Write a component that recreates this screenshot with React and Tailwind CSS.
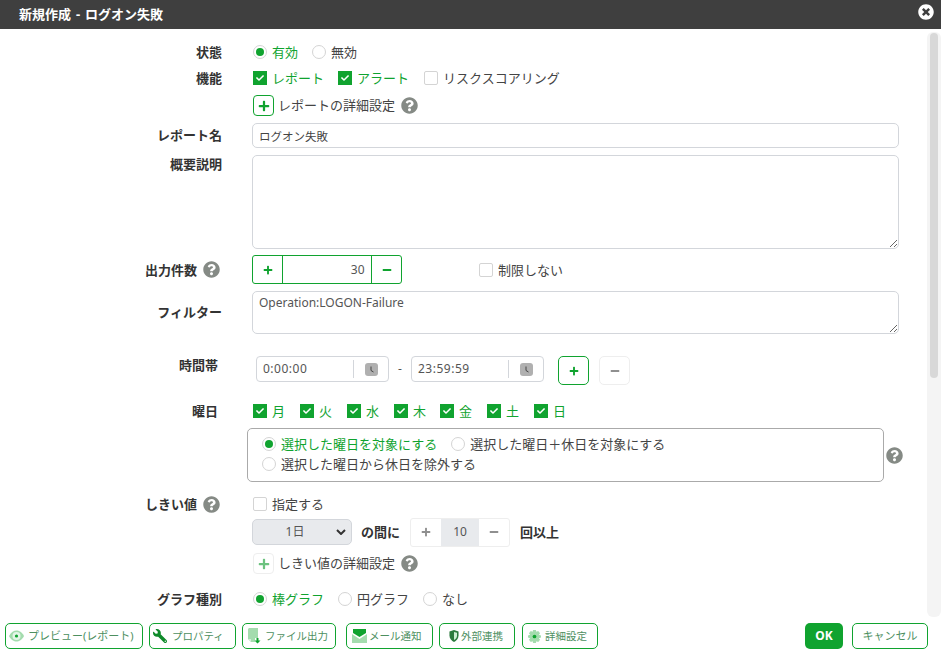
import React from "react";
import { FaQuestionCircle, FaTimesCircle, FaPlus, FaMinus, FaWrench, FaCheck } from "react-icons/fa";

const G = "text-[#10a32f]";

function Help({ className = "" }) {
  return <FaQuestionCircle className={"text-[#858a85] text-[17px] shrink-0 " + className} />;
}

function Radio({ on, label, className = "" }) {
  return (
    <label className={"flex items-center " + className}>
      <span className="w-[14px] h-[14px] rounded-full border border-[#d4d4d4] flex items-center justify-center shrink-0 bg-white">
        {on && <span className="w-[8px] h-[8px] rounded-full bg-[#10a32f]" />}
      </span>
      <span className={"ml-[5px] " + (on ? G : "text-[#444]")}>{label}</span>
    </label>
  );
}

function Check({ on, label, className = "" }) {
  return (
    <label className={"flex items-center " + className}>
      <span
        className={
          "w-[14px] h-[14px] flex items-center justify-center shrink-0 " +
          (on ? "bg-[#10a32f]" : "border border-[#d4d4d4] rounded-[2px] bg-white")
        }
      >
        {on && <FaCheck className="text-white text-[8px]" />}
      </span>
      <span className={"ml-[5px] " + (on ? G : "text-[#444]")}>{label}</span>
    </label>
  );
}

function Row({ label, help, h, mt = 0, children, labelClass = "" }) {
  return (
    <div className="flex items-stretch" style={{ height: h, marginTop: mt }}>
      <div className={"w-[222px] shrink-0 flex justify-end items-center font-bold text-[#333] " + labelClass}>
        {label}
        {help && <Help className="ml-[6px] mr-[2px]" />}
      </div>
      <div className="ml-[30px] flex-1 flex items-center min-w-0">{children}</div>
    </div>
  );
}

function Clock() {
  return (
    <svg width="13" height="13" viewBox="0 0 13 13" className="shrink-0">
      <rect width="13" height="13" rx="3" fill="#b0b0b0" />
      <path d="M6 3.5V7.5L8.5 9" stroke="#444" strokeWidth="1" fill="none" />
    </svg>
  );
}

function TimeInput({ value }) {
  return (
    <div className="w-[133px] h-[26px] border border-[#d3d6db] rounded-[4px] flex items-center pl-[6px] text-[#555] tracking-[0.5px]">
      <span className="flex-1">{value}</span>
      <span className="w-px h-[18px] bg-[#d3d6db]" />
      <span className="w-[34px] flex justify-center"><Clock /></span>
    </div>
  );
}

function Eye() {
  return (
    <svg width="15" height="12" viewBox="0 0 15 12">
      <path d="M0 6C2 2 5 0.5 7.5 0.5S13 2 15 6c-2 4-5 5.5-7.5 5.5S2 10 0 6z" fill="#a4dcae" />
      <circle cx="7.5" cy="6" r="4" fill="#e4f5e7" />
      <circle cx="7.5" cy="6" r="1.6" fill="#10a32f" />
    </svg>
  );
}

function FileIco() {
  return (
    <svg width="14" height="16" viewBox="0 0 14 16">
      <path d="M2 0H11V10H8V14H4L1 11V1z" fill="#a4dcae" />
      <path d="M1 11H4V14z" fill="#d6efda" />
      <path d="M9.5 10H11.5V12.5H13.5L10.5 15.5L7.5 12.5H9.5z" fill="#10a32f" />
    </svg>
  );
}

function Mail() {
  return (
    <svg width="15" height="14" viewBox="0 0 15 14">
      <path d="M0 5L7.5 10L15 5V14H0z" fill="#a4dcae" />
      <path d="M1 0H14V4L7.5 8L1 4z" fill="#10a32f" />
    </svg>
  );
}

function Shield() {
  return (
    <svg width="10" height="12" viewBox="0 0 11 13">
      <path d="M0.5 1.5L5.5 0L10.5 1.5V6C10.5 9.5 8 12 5.5 13C3 12 0.5 9.5 0.5 6z" fill="#2b7a3d" />
      <path d="M5.5 2V11C7.5 10 8.8 8.2 8.8 6V2.8z" fill="#cdeed3" />
    </svg>
  );
}

function Gear() {
  return (
    <svg width="13" height="13" viewBox="0 0 14 14">
      <path d="M5.5 0H8.5L9 2L11 1.2L13 3.5L11.7 5L14 5.8V8.2L11.7 9L13 10.5L11 12.8L9 12L8.5 14H5.5L5 12L3 12.8L1 10.5L2.3 9L0 8.2V5.8L2.3 5L1 3.5L3 1.2L5 2z" fill="#a4dcae" />
      <circle cx="7" cy="7" r="2" fill="#10a32f" />
    </svg>
  );
}

function FootBtn({ icon, label, w, className = "" }) {
  return (
    <button
      className={"h-[26px] border border-[#10a32f] rounded-[5px] flex items-center justify-start text-[#4d8f5f] bg-white shrink-0 " + className}
      style={{ width: w }}
    >
      {icon}
      <span>{label}</span>
    </button>
  );
}

export default function App() {
  return (
    <div className="w-[941px] h-[657px] bg-white flex flex-col overflow-hidden text-[13px] leading-[18px] text-[#444] font-['Noto_Sans','Noto_Sans_CJK_JP',sans-serif]">
      <header className="h-[29px] bg-[#3f3f3f] flex items-center justify-between pl-[19px] pr-[7px] shrink-0">
        <h1 className="text-white font-bold text-[13px] -mt-[2px] [word-spacing:1.5px]">新規作成 - ログオン失敗</h1>
        <FaTimesCircle className="text-white text-[16px] -mt-[5px]" />
      </header>

      <div className="flex-1 flex min-h-0">
        <main className="flex-1 min-w-0 overflow-hidden pt-[14px]">
          <Row label="状態" h={18}>
            <Radio on label="有効" className="ml-[1px]" />
            <Radio label="無効" className="ml-[14px]" />
          </Row>
          <Row label="機能" h={18} mt={8}>
            <Check on label="レポート" className="ml-[1px]" />
            <Check on label="アラート" className="ml-[14px]" />
            <Check label="リスクスコアリング" className="ml-[15px]" />
          </Row>
          <Row label="" h={21} mt={8}>
            <span className="w-[21px] h-[21px] ml-[1px] border border-[#10a32f] rounded-[4px] flex items-center justify-center">
              <FaPlus className="text-[#10a32f] text-[12px]" />
            </span>
            <span className="ml-[4px] -mt-[2px]">レポートの詳細設定</span>
            <Help className="ml-[6px]" />
          </Row>
          <Row label="レポート名" h={25} mt={7} labelClass="pb-[2px]">
            <input readOnly value="ログオン失敗" className="w-[647px] h-[25px] border border-[#d3d6db] rounded-[5px] px-[6px] text-[11.5px] text-[#444] outline-none" />
          </Row>
          <div className="flex h-[94px] mt-[7px]">
            <div className="w-[222px] shrink-0 text-right font-bold text-[#333]">概要説明</div>
            <textarea readOnly className="ml-[30px] w-[647px] h-[94px] border border-[#d3d6db] rounded-[5px] outline-none" />
          </div>
          <Row label="出力件数" help h={29} mt={6}>
            <div className="flex h-[29px] w-[150px] border border-[#10a32f] rounded-[3px]">
              <span className="w-[30px] flex items-center justify-center border-r border-[#10a32f]"><FaPlus className="text-[#10a32f] text-[10px]" /></span>
              <span className="flex-1 flex items-center justify-end pr-[6px] text-[12px] text-[#555] tracking-[0.3px]">30</span>
              <span className="w-[30px] flex items-center justify-center border-l border-[#10a32f]"><FaMinus className="text-[#10a32f] text-[10px]" /></span>
            </div>
            <Check label="制限しない" className="ml-[77px]" />
          </Row>
          <Row label="フィルター" h={43} mt={7} labelClass="pb-[2px]">
            <textarea readOnly value="Operation:LOGON-Failure" className="w-[647px] h-[43px] border border-[#d3d6db] rounded-[5px] px-[6px] py-[2px] text-[12px] leading-[18px] text-[#555] outline-none" />
          </Row>
          <div className="flex mt-[22px] h-[29px]">
            <div className="w-[218px] shrink-0 text-right font-bold text-[#333]">時間帯</div>
            <div className="ml-[38px] flex items-start text-[12px]">
              <TimeInput value="0:00:00" />
              <span className="w-[22px] text-center leading-[26px] text-[#555]">-</span>
              <TimeInput value="23:59:59" />
              <span className="ml-[14px] w-[31px] h-[29px] border border-[#10a32f] rounded-[5px] flex items-center justify-center">
                <FaPlus className="text-[#10a32f] text-[10px]" />
              </span>
              <span className="ml-[10px] w-[31px] h-[29px] border border-[#eeeeee] rounded-[5px] flex items-center justify-center">
                <FaMinus className="text-[#8f8f8f] text-[10px]" />
              </span>
            </div>
          </div>
          <Row label="曜日" h={18} mt={17} labelClass="pr-[4px]">
            <Check on label="月" className="ml-[1px]" />
            <Check on label="火" className="ml-[15px]" />
            <Check on label="水" className="ml-[15px]" />
            <Check on label="木" className="ml-[15px]" />
            <Check on label="金" className="ml-[14px]" />
            <Check on label="土" className="ml-[15px]" />
            <Check on label="日" className="ml-[15px]" />
          </Row>
          <div className="flex items-center ml-[247px] mt-[8px]">
            <div className="w-[637px] h-[54px] border border-[#aaaaaa] rounded-[5px] pl-[14px] pt-[6px] shrink-0">
              <div className="flex">
                <Radio on label="選択した曜日を対象にする" />
                <Radio label="選択した曜日＋休日を対象にする" className="ml-[14px]" />
              </div>
              <Radio label="選択した曜日から休日を除外する" className="mt-[2px]" />
            </div>
            <Help className="ml-[2px]" />
          </div>
          <Row label="しきい値" help h={18} mt={13}>
            <Check label="指定する" className="ml-[1px]" />
          </Row>
          <Row label="" h={26} mt={6}>
            <div className="w-[100px] h-[26px] bg-[#e8eaed] border border-[#d3d6db] rounded-[5px] flex items-center text-[12px] text-[#555]">
              <span className="flex-1 text-center pl-[1px]">1日</span>
              <svg width="10" height="6" viewBox="0 0 10 6" className="mr-[5px]"><path d="M1 1L5 5L9 1" fill="none" stroke="#333" strokeWidth="2" /></svg>
            </div>
            <span className="ml-[9px] font-bold text-[#333]">の間に</span>
            <div className="ml-[10px] w-[100px] h-[29px] border border-[#eeeeee] rounded-[3px] flex">
              <span className="w-[30px] flex items-center justify-center"><FaPlus className="text-[#8f8f8f] text-[10px]" /></span>
              <span className="flex-1 bg-[#e8eaed] flex items-center justify-center text-[12px] text-[#555]">10</span>
              <span className="w-[30px] flex items-center justify-center"><FaMinus className="text-[#8f8f8f] text-[10px]" /></span>
            </div>
            <span className="ml-[10px] font-bold text-[#333]">回以上</span>
          </Row>
          <Row label="" h={21} mt={8}>
            <span className="w-[21px] h-[21px] ml-[1px] border border-[#eeeeee] rounded-[4px] flex items-center justify-center">
              <FaPlus className="text-[#6cc27f] text-[12px]" />
            </span>
            <span className="ml-[4px] -mt-[2px]">しきい値の詳細設定</span>
            <Help className="ml-[6px]" />
          </Row>
          <Row label="グラフ種別" h={18} mt={16}>
            <Radio on label="棒グラフ" className="ml-[1px]" />
            <Radio label="円グラフ" className="ml-[14px]" />
            <Radio label="なし" className="ml-[14px]" />
          </Row>
        </main>
        <aside className="w-[14px] shrink-0 bg-[#f4f4f4] rounded-[6px] mt-[3px] pl-[3px] pt-[1px]">
          <div className="w-[8px] h-[345px] bg-[#d8d8d8] rounded-[4px]" />
        </aside>
      </div>

      <footer className="h-[40px] shrink-0 flex pl-[5px] pt-[6px]">
        <FootBtn w={138} className="pl-[3px] gap-[4px] text-[11px]" icon={<Eye />} label="プレビュー(レポート)" />
        <FootBtn w={87} className="ml-[6px] pl-[3px] gap-[5px] text-[10.5px]" icon={<FaWrench className="text-[#0f8a2a] text-[14px] -scale-x-100" />} label="プロパティ" />
        <FootBtn w={94} className="ml-[6px] pl-[4px] gap-[4px] text-[10.5px]" icon={<FileIco />} label="ファイル出力" />
        <FootBtn w={87} className="ml-[10px] pl-[5px] gap-[2px] text-[10.5px]" icon={<Mail />} label="メール通知" />
        <FootBtn w={76} className="ml-[6px] pl-[9px] gap-[2px] text-[10.5px]" icon={<Shield />} label="外部連携" />
        <FootBtn w={76} className="ml-[7px] pl-[5px] gap-[4px] text-[10.5px]" icon={<Gear />} label="詳細設定" />
        <button className="ml-[207px] w-[38px] h-[26px] bg-[#10a32f] rounded-[5px] text-white font-bold text-[12px]">OK</button>
        <button className="ml-[9px] w-[76px] h-[26px] border border-[#10a32f] rounded-[5px] text-[11px] text-[#4d8f5f]">キャンセル</button>
      </footer>
    </div>
  );
}
